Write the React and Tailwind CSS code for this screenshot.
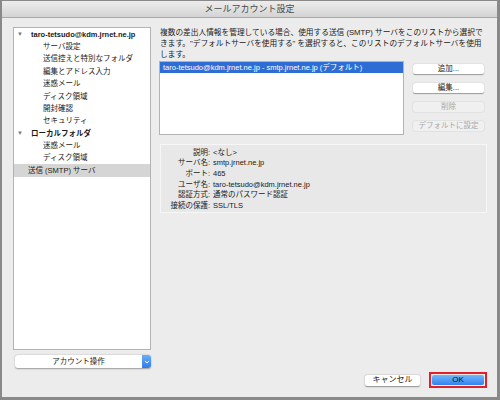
import React from 'react';

const font = { fontFamily: '"Liberation Sans", "Noto Sans CJK JP", sans-serif' };

const tree = [
  { label: 'taro-tetsudo@kdm.jrnet.ne.jp', top: true },
  { label: 'サーバ設定' },
  { label: '送信控えと特別なフォルダ' },
  { label: '編集とアドレス入力' },
  { label: '迷惑メール' },
  { label: 'ディスク領域' },
  { label: '開封確認' },
  { label: 'セキュリティ' },
  { label: 'ローカルフォルダ', top: true },
  { label: '迷惑メール' },
  { label: 'ディスク領域' },
  { label: '送信 (SMTP) サーバ', plain: true, selected: true },
];

const details = [
  ['説明:', '<なし>'],
  ['サーバ名:', 'smtp.jrnet.ne.jp'],
  ['ポート:', '465'],
  ['ユーザ名:', 'taro-tetsudo@kdm.jrnet.ne.jp'],
  ['認証方式:', '通常のパスワード認証'],
  ['接続の保護:', 'SSL/TLS'],
];

function SideButton({ children, disabled }) {
  return (
    <div
      className={`h-[10px] w-[71px] flex items-center justify-center rounded-[2px] text-[7.5px] leading-none ${
        disabled
          ? 'bg-[#f0f0f0] text-[#a8a8a8] shadow-[0_0_0_0.5px_#d8d8d8]'
          : 'bg-white text-[#222] shadow-[0_0.5px_1px_rgba(0,0,0,0.35)]'
      }`}
    >
      {children}
    </div>
  );
}

export default function App() {
  return (
    <div className="w-[500px] h-[400px] bg-[#898989] pl-[2px] pr-[3px] pb-[3px] pt-[1px] flex flex-col" style={font}>
      {/* TITLE BAR */}
      <div className="h-[17px] flex-none flex items-center justify-center bg-gradient-to-b from-[#ededed] to-[#d4d4d4] border-b border-[#a9a9a9]">
        <span className="text-[9px] text-[#4a4a4a] leading-none">メールアカウント設定</span>
      </div>

      {/* BODY */}
      <div className="flex-1 bg-[#ececec] flex pl-[11px] pt-[9px]">
        {/* LEFT COLUMN */}
        <div className="w-[138px] flex flex-col">
          <div className="h-[323px] bg-white border border-[#b3b3b3]">
            {tree.map((item, i) => (
              <div
                key={i}
                className={`h-[12.4px] flex items-center text-[7.5px] text-[#1a1a1a] ${item.selected ? 'bg-[#d5d5d5]' : ''}`}
              >
                {item.top ? (
                  <>
                    <span className="w-[17px] pl-[3px] text-[6px] text-[#7b7b7b]">▼</span>
                    <span className="font-semibold">{item.label}</span>
                  </>
                ) : item.plain ? (
                  <span className="pl-[14px]">{item.label}</span>
                ) : (
                  <span className="pl-[29px]">{item.label}</span>
                )}
              </div>
            ))}
          </div>
          <div className="mt-[5px] ml-[2px] h-[13px] flex rounded-[3px] bg-white shadow-[0_0.5px_1.5px_rgba(0,0,0,0.35)] overflow-hidden">
            <div className="flex-1 flex items-center justify-center text-[7.5px] text-[#222]">アカウント操作</div>
            <div className="w-[9px] bg-gradient-to-b from-[#6aaef7] to-[#2a7de8] flex items-center justify-center">
              <svg width="6" height="4" viewBox="0 0 6 4">
                <path d="M1 1 L3 3 L5 1" fill="none" stroke="white" strokeWidth="1" />
              </svg>
            </div>
          </div>
        </div>

        {/* RIGHT COLUMN */}
        <div className="ml-[8px] flex-1 flex flex-col pr-[10px] pb-[9px]">
          <p className="pl-[1px] text-[7.7px] leading-[11px] text-[#1a1a1a] whitespace-nowrap">
            複数の差出人情報を管理している場合、使用する送信 (SMTP) サーバをこのリストから選択で
            <br />
            きます。"デフォルトサーバを使用する" を選択すると、このリストのデフォルトサーバを使用
            <br />
            します。
          </p>

          <div className="mt-[1px] flex">
            <div className="w-[245px] h-[74px] bg-white border border-[#b3b3b3]">
              <div className="h-[11px] bg-[#2e6dd3] text-white text-[7.5px] flex items-center pl-[3px]">
                taro-tetsudo@kdm.jrnet.ne.jp - smtp.jrnet.ne.jp (デフォルト)
              </div>
            </div>
            <div className="ml-[9px] pt-[3px] flex flex-col gap-[9px]">
              <SideButton>追加...</SideButton>
              <SideButton>編集...</SideButton>
              <SideButton disabled>削除</SideButton>
              <SideButton disabled>デフォルトに設定</SideButton>
            </div>
          </div>

          <div className="mt-[9px] ml-[1px] h-[69px] bg-[#e8e8e8] border border-[#f6f6f6] pt-[2px]">
            {details.map(([k, v]) => (
              <div key={k} className="h-[10.7px] flex items-center text-[7.5px] text-[#1a1a1a]">
                <span className="w-[49px] text-right">{k}</span>
                <span className="ml-[3px]">{v}</span>
              </div>
            ))}
          </div>

          <div className="flex-1" />

          <div className="flex items-center justify-end">
            <div className="h-[11px] w-[55px] flex items-center justify-center rounded-[2px] bg-white shadow-[0_0.5px_1.5px_rgba(0,0,0,0.4)] text-[8px] text-[#222]">
              キャンセル
            </div>
            <div className="ml-[9px] w-[58px] h-[16px] border-2 border-[#e3202a] p-[1px] flex">
              <div className="flex-1 rounded-[2px] bg-gradient-to-b from-[#72b5fa] to-[#2f82ee] flex items-center justify-center text-[8px] text-[#111]">
                OK
              </div>
            </div>
          </div>
        </div>
      </div>
    </div>
  );
}
